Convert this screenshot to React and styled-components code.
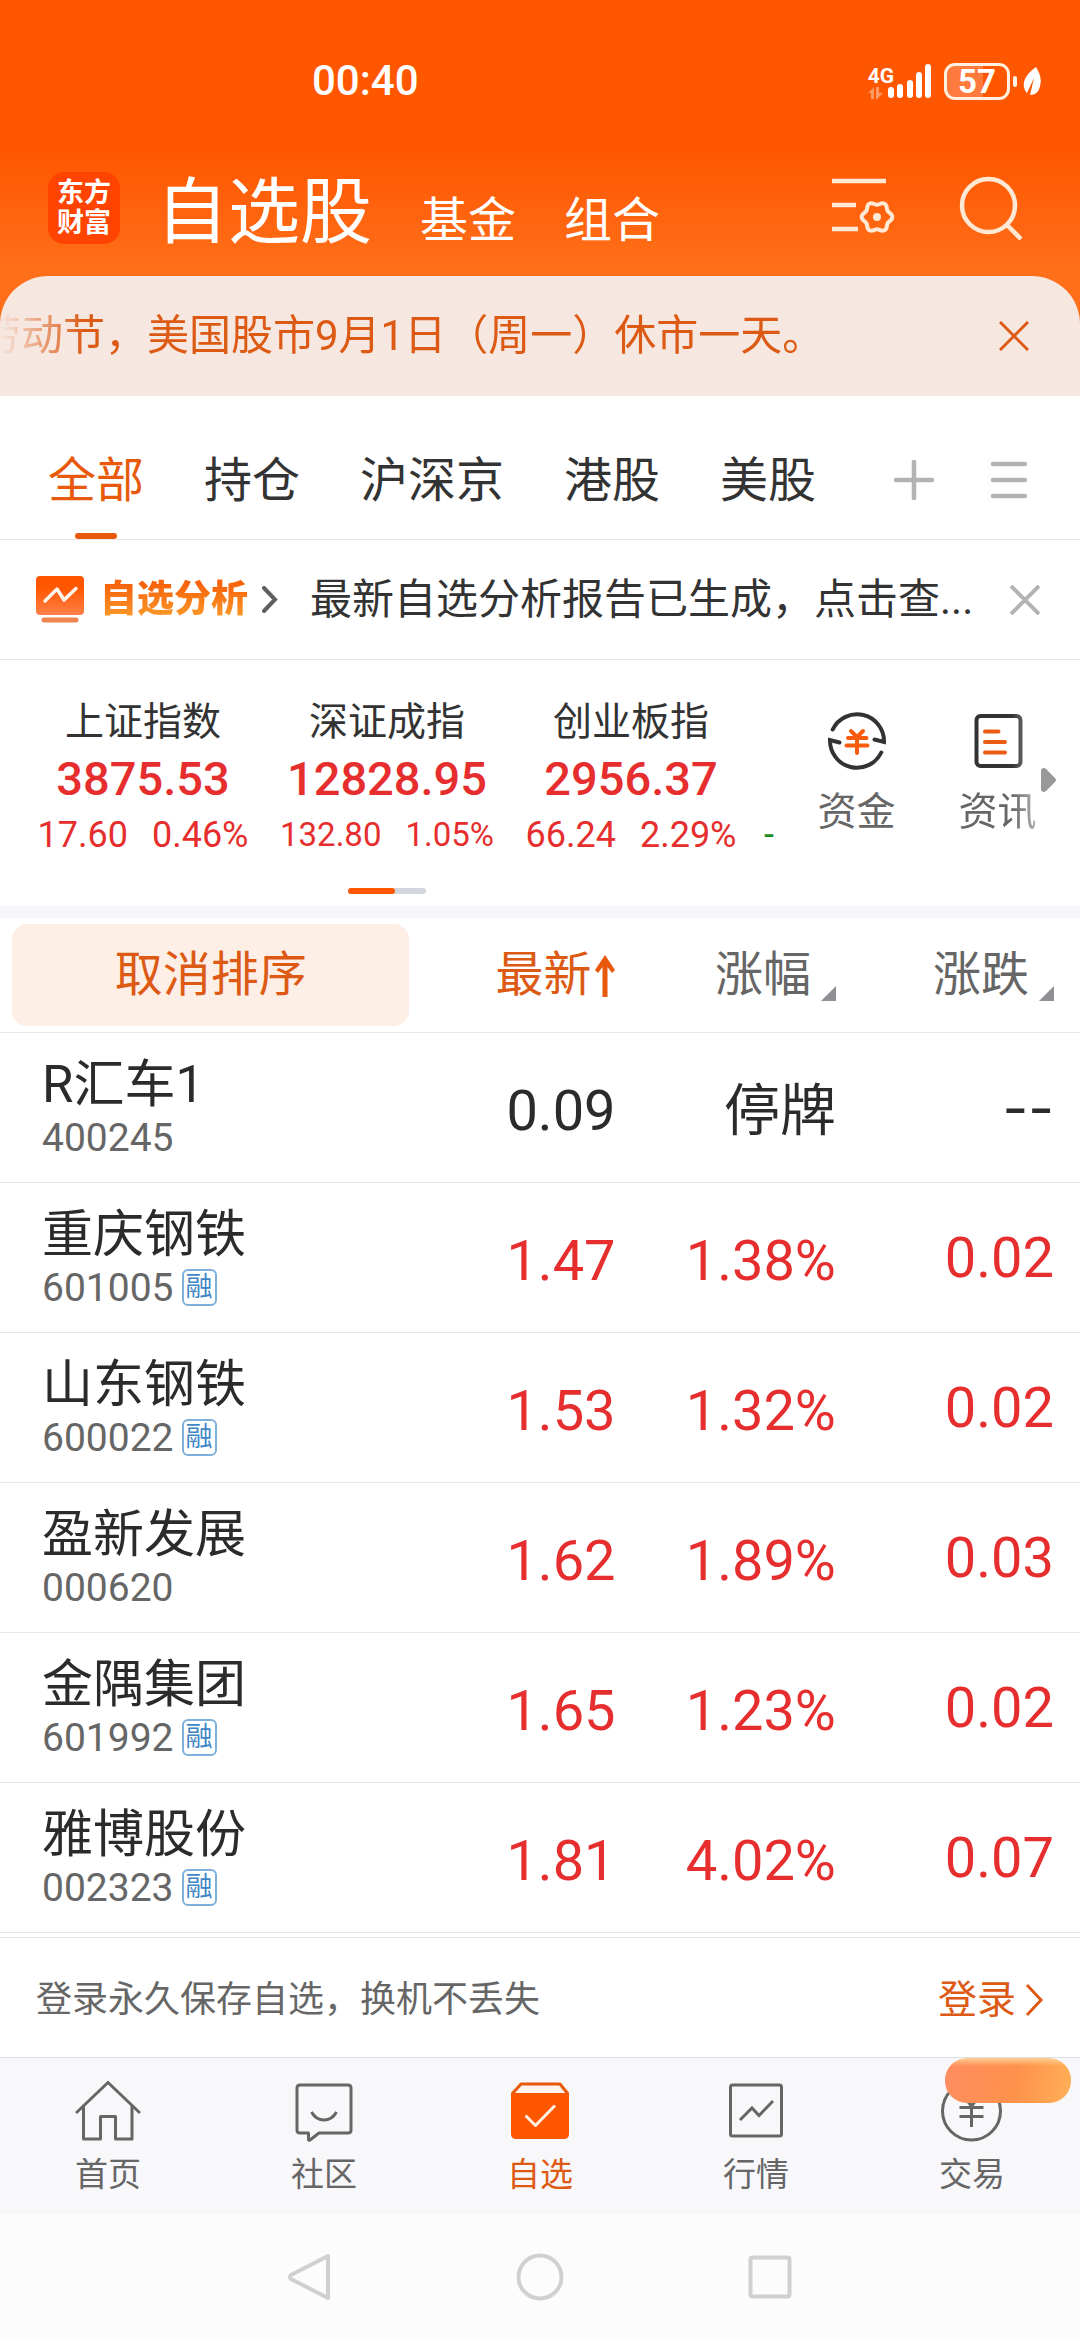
import React from "react";
import styled, { createGlobalStyle, css } from "styled-components";

const color = {
  brand: "#e8590c",
  accent: "#ff5600",
  ink: "#2b2b2b",
  text: "#333333",
  muted: "#666666",
  faint: "#b3b3b3",
  line: "#e8e8ea",
  up: "#e62e2e",
  down: "#1d8f1d",
};

const GlobalStyle = createGlobalStyle`
  * { box-sizing: border-box; }
  body {
    margin: 0;
    background: #fcfcfc;
    color: ${color.text};
    font-family: Roboto, "Noto Sans CJK SC", sans-serif;
  }
  button {
    margin: 0;
    padding: 0;
    border: 0;
    background: none;
    color: inherit;
    font: inherit;
    cursor: pointer;
  }
  a { color: inherit; text-decoration: none; }
  svg { display: block; flex: none; }
`;

const Page = styled.div`
  display: flex;
  flex-direction: column;
  background: #ffffff;
`;

/* ---------- header ---------- */

const Hero = styled.header`
  background: linear-gradient(#ff5600 0, #ff5600 150px, #ff6f1a 270px, #ff6f1a 100%);
  color: #ffffff;
`;

const StatusBar = styled.div`
  display: flex;
  align-items: center;
  justify-content: space-between;
  height: 160px;
  padding: 2px 39px 0 312px;
`;

const Clock = styled.time`
  font-size: 42px;
  font-weight: 500;
  line-height: 48px;
`;

const StatusIcons = styled.div`
  display: flex;
  align-items: center;
  gap: 6px;
`;

const Network = styled.div`
  display: flex;
  align-items: flex-end;
  margin-right: 6px;
`;

const NetworkType = styled.div`
  display: flex;
  flex-direction: column;
  align-items: flex-start;
  margin-right: -6px;
  font-size: 21px;
  font-weight: 700;
  line-height: 22px;
`;

const Battery = styled.div`
  display: flex;
  align-items: center;
  gap: 3px;

  &::after {
    content: "";
    width: 4px;
    height: 11px;
    border-radius: 2px;
    background: #fff3e6;
  }
`;

const BatteryLevel = styled.span`
  width: 66px;
  height: 37px;
  border: 3px solid #fff0e0;
  border-radius: 11px;
  background: linear-gradient(90deg, #ff7a3d 60%, transparent 60%);
  font-size: 33px;
  font-weight: 700;
  line-height: 32px;
  text-align: center;
`;

const TitleBar = styled.div`
  display: flex;
  align-items: center;
  height: 116px;
  padding: 0 57px 20px 48px;
`;

const Logo = styled.a`
  display: flex;
  flex-direction: column;
  align-items: center;
  justify-content: center;
  width: 72px;
  height: 72px;
  margin-right: 36px;
  border-radius: 16px;
  background: #ff4300;
  font-size: 27px;
  font-weight: 700;
  line-height: 30px;
`;

const Sections = styled.nav`
  display: flex;
  flex: 1;
  align-items: baseline;
  gap: 48px;
  padding-top: 10px;
`;

const Section = styled.button`
  font-size: ${(p) => (p.$active ? 72 : 48)}px;
  line-height: ${(p) => (p.$active ? 84 : 60)}px;
`;

const TitleActions = styled.div`
  display: flex;
  align-items: center;
  gap: 63px;
`;

const Notice = styled.div`
  display: flex;
  align-items: center;
  justify-content: space-between;
  height: 120px;
  padding-right: 51px;
  border-radius: 48px 48px 0 0;
  background: #f6e7e0;
  color: #dc5a14;
`;

const Marquee = styled.div`
  flex: 1;
  overflow: hidden;
  white-space: nowrap;
  font-size: 42px;
  line-height: 60px;
  text-indent: -21px;
  mask-image: linear-gradient(90deg, transparent, #000 84px);
`;

/* ---------- group tabs ---------- */

const Groups = styled.nav`
  display: flex;
  align-items: stretch;
  justify-content: space-between;
  height: 144px;
  padding: 0 52px 0 48px;
  border-bottom: 1px solid ${color.line};
`;

const GroupList = styled.div`
  display: flex;
  gap: 60px;
`;

const Group = styled.button`
  position: relative;
  padding-top: 27px;
  font-size: 48px;
  line-height: 60px;
  color: ${(p) => (p.$active ? color.brand : color.text)};

  ${(p) =>
    p.$active &&
    css`
      &::after {
        content: "";
        position: absolute;
        bottom: 0;
        left: calc(50% - 21px);
        width: 42px;
        height: 6px;
        border-radius: 3px;
        background: ${color.brand};
      }
    `}
`;

const GroupActions = styled.div`
  display: flex;
  align-items: center;
  gap: 56px;
  padding-top: 24px;
`;

/* ---------- analysis strip ---------- */

const Analysis = styled.section`
  display: flex;
  align-items: center;
  height: 120px;
  padding: 0 40px 0 36px;
  border-bottom: 1px solid ${color.line};
`;

const AnalysisLink = styled.a`
  display: flex;
  align-items: center;
  gap: 14px;
`;

const AnalysisTitle = styled.strong`
  font-size: 37px;
  font-weight: 800;
  line-height: 60px;
  background: linear-gradient(180deg, #f7640c 25%, #fb9a2a 80%);
  background-clip: text;
  color: transparent;
`;

const AnalysisText = styled.p`
  flex: 1;
  margin: 0 0 0 32px;
  overflow: hidden;
  white-space: nowrap;
  font-size: 42px;
  line-height: 60px;
`;

/* ---------- indices ---------- */

const Market = styled.section`
  display: flex;
  height: 258px;
  border-bottom: 12px solid #f6f7fa;
`;

const IndexPane = styled.div`
  display: flex;
  flex: 1;
  flex-direction: column;
  align-items: center;
  min-width: 0;
  padding-top: 35px;
`;

const IndexStrip = styled.div`
  display: flex;
  width: 100%;
  padding-left: 21px;
  overflow: hidden;
`;

const IndexCard = styled.button`
  display: flex;
  flex: 0 0 ${(p) => (p.$peek ? 21 : 244)}px;
  flex-direction: column;
  align-items: ${(p) => (p.$peek ? "flex-end" : "center")};
`;

const IndexName = styled.span`
  height: 54px;
  font-size: 39px;
  line-height: 54px;
`;

const IndexValue = styled.span`
  height: 59px;
  color: ${color.up};
  font-size: 47px;
  font-weight: 500;
  line-height: 60px;
`;

const IndexChange = styled.span`
  display: flex;
  gap: 24px;
  height: 54px;
  color: ${(p) => (p.$down ? color.down : color.up)};
  font-size: ${(p) => (p.$compact ? 33 : 36)}px;
  line-height: 54px;
`;

const Pager = styled.div`
  width: 78px;
  height: 6px;
  margin-top: 26px;
  border-radius: 3px;
  background: #d3d6dc;

  &::before {
    content: "";
    display: block;
    width: 60%;
    height: 100%;
    border-radius: 3px;
    background: ${color.accent};
  }
`;

const Shortcuts = styled.div`
  position: relative;
  display: flex;
  flex: none;
  padding: 51px 12px 0;
`;

const Shortcut = styled.button`
  display: flex;
  flex-direction: column;
  align-items: center;
  align-self: flex-start;
  gap: 14px;
  width: 141px;
  color: ${color.muted};
  font-size: 39px;
  line-height: 54px;
  ${(p) => p.$fading && "mask-image: linear-gradient(90deg, #000 60%, rgba(0, 0, 0, 0.5) 78%);"}
`;

const More = styled.span`
  position: absolute;
  top: 108px;
  right: 24px;
`;

/* ---------- quotes table ---------- */

const Quotes = styled.table`
  width: 100%;
  border-spacing: 0;
  table-layout: fixed;
`;

const HeadCell = styled.th`
  width: ${(p) => p.$width};
  height: 115px;
  padding: 0 ${(p) => (p.$last ? 26 : 0)}px 0 0;
  border-bottom: 1px solid ${color.line};
  font-weight: 400;
  text-align: right;
`;

const ClearSort = styled.button`
  display: block;
  width: calc(100% - 12px);
  height: 102px;
  margin-left: 12px;
  border-radius: 15px;
  background: #fdeee6;
  color: #dc5a14;
  font-size: 48px;
  line-height: 96px;
  text-align: center;
`;

const SortButton = styled.button`
  display: inline-flex;
  align-items: flex-end;
  gap: ${(p) => (p.$active ? 2 : 10)}px;
  vertical-align: middle;
  color: ${(p) => (p.$active ? "#dc5a14" : color.muted)};
  font-size: 48px;
  line-height: 60px;
`;

const Cell = styled.td`
  height: 150px;
  padding: 6px ${(p) => (p.$last ? 26 : 0)}px ${(p) => (p.$last ? 6 : 0)}px 0;
  border-bottom: 1px solid ${color.line};
  color: ${(p) => (p.$up ? color.up : color.ink)};
  font-family: ${(p) => (p.$empty ? "Inter, sans-serif" : "inherit")};
  font-size: 56px;
  line-height: 66px;
  text-align: right;
  white-space: nowrap;
`;

const NameCell = styled.td`
  padding: 2px 0 0 42px;
  border-bottom: 1px solid ${color.line};
`;

const StockName = styled.div`
  color: ${color.ink};
  font-size: 51px;
  line-height: 58px;
`;

const StockCode = styled.div`
  display: flex;
  align-items: center;
  gap: 8px;
  color: ${color.muted};
  font-size: 39px;
  line-height: 48px;
`;

const MarginTag = styled.span`
  padding: 0 2px;
  border: 2px solid #7fb0dc;
  border-radius: 6px;
  color: #3f86c6;
  font-size: 27px;
  line-height: 33px;
`;

/* ---------- footer ---------- */

const LoginBar = styled.div`
  display: flex;
  align-items: center;
  justify-content: space-between;
  height: 120px;
  margin-top: 4px;
  padding: 4px 36px 0;
  border-top: 1px solid ${color.line};
  color: ${color.muted};
  font-size: 36px;
  line-height: 54px;
`;

const LoginLink = styled.a`
  display: flex;
  align-items: center;
  gap: 9px;
  color: #dc5a14;
  font-size: 39px;
`;

const TabBar = styled.nav`
  position: relative;
  display: flex;
  height: 157px;
  border-top: 1px solid #dfe0e4;
  background: #f8f8fb;
`;

const Tab = styled.a`
  display: flex;
  flex: 1;
  flex-direction: column;
  align-items: center;
  gap: 11px;
  padding-top: 20px;
  color: ${(p) => (p.$active ? "#dc5a14" : color.muted)};
  font-size: 33px;
  line-height: 40px;
`;

const Promo = styled.span`
  position: absolute;
  top: 0;
  right: 9px;
  width: 126px;
  height: 45px;
  border-radius: 22px;
  background:
    linear-gradient(#ffcf94, transparent 8px),
    linear-gradient(100deg, #ff8d62, #ff914b 55%, #ffb057);
`;

const SystemNav = styled.div`
  display: flex;
  align-items: center;
  justify-content: center;
  gap: 182px;
  height: 126px;
  background: #fcfcfc;
`;

/* ---------- icons ---------- */

const Svg = ({ w, h = w, sw = 3, children, ...rest }) => (
  <svg
    width={w}
    height={h}
    viewBox={`0 0 ${w} ${h}`}
    fill="none"
    stroke="currentColor"
    strokeWidth={sw}
    aria-hidden="true"
    {...rest}
  >
    {children}
  </svg>
);

const gearPoints = Array.from({ length: 90 }, (_, i) => {
  const a = (i / 90) * Math.PI * 2;
  const r = 13.8 + 1.5 * Math.cos(6 * a);
  return `${(47 + r * Math.cos(a)).toFixed(2)},${(39 + r * Math.sin(a)).toFixed(2)}`;
}).join(" ");

const FilterIcon = () => (
  <Svg w={66} h={60} sw={4.5} stroke="#ffe9d4">
    <path d="M2 3H56M2 27H26M2 51H28" />
    <polygon points={gearPoints} strokeWidth="4" strokeLinejoin="round" />
    <circle cx="47" cy="39" r="4" fill="#ffe9d4" stroke="none" />
  </Svg>
);

const SearchIcon = () => (
  <Svg w={64} sw={4.5} stroke="#ffe9d4">
    <circle cx="29.5" cy="29.5" r="26.5" />
    <path d="M48 49L62 63" />
  </Svg>
);

const CloseIcon = ({ sw, ...rest }) => (
  <Svg w={30} sw={sw} {...rest}>
    <path d="M1 1L29 29M29 1L1 29" />
  </Svg>
);

const SignalIcon = () => (
  <Svg w={44} h={36} fill="#ffffff" stroke="none">
    <rect x="0" y="24" width="6" height="11" rx="3" />
    <rect x="9" y="21" width="6" height="14" rx="3" />
    <rect x="19" y="17" width="6" height="18" rx="3" />
    <rect x="28" y="9" width="6" height="26" rx="3" />
    <rect x="37" y="1" width="6" height="34" rx="3" />
  </Svg>
);

const DataIcon = () => (
  <Svg w={16} h={12} fill="#ff9a66" stroke="none">
    <path d="M0 6L6 0V12H3V6ZM8 0H11V6H15L9 12H8Z" />
  </Svg>
);

const LeafIcon = () => (
  <Svg w={18} h={28}>
    <path d="M13 0C17 6 19 13 17 19C16 25 12 28 7 28L11 11L4 26C-2 19 0 9 13 0Z" fill="#ffffff" stroke="none" />
  </Svg>
);

const PlusIcon = () => (
  <Svg w={40} sw={4.5} stroke={color.faint} strokeLinecap="round">
    <path d="M20 2V38M2 20H38" />
  </Svg>
);

const MenuIcon = () => (
  <Svg w={38} h={38} sw={4.5} stroke={color.faint} strokeLinecap="round">
    <path d="M3 3H35M3 19H35M3 35H35" />
  </Svg>
);

const AnalysisIcon = () => (
  <Svg w={50} h={48}>
    <defs>
      <linearGradient id="analysis" x1="0" y1="0" x2="0" y2="1">
        <stop offset="0.3" stopColor="#ff5600" />
        <stop offset="1" stopColor="#ff8048" />
      </linearGradient>
    </defs>
    <rect width="48" height="39" rx="4" fill="url(#analysis)" stroke="none" />
    <path d="M9 25L21 13L28 24L40 12.5" stroke="#fff4ea" strokeWidth="3.5" strokeLinejoin="round" strokeLinecap="round" />
    <path d="M8 44H40" stroke="#ee8550" strokeWidth="5" strokeLinecap="round" />
  </Svg>
);

const ChevronIcon = ({ w = 16, h = 27, sw = 4, ...rest }) => (
  <Svg w={w} h={h} sw={sw} {...rest}>
    <path d={`M2 2L${w - 3} ${h / 2}L2 ${h - 2}`} />
  </Svg>
);

const FundsIcon = () => (
  <Svg w={60} sw={4} stroke={color.text} strokeLinecap="round">
    <path d="M5.7 18.5A27 27 0 0 1 57 31L47.5 28.5" />
    <path d="M54.3 41.5A27 27 0 0 1 3 29L12.5 31.5" />
    <path d="M24 20L30 26L36 20M21 27H39.5M19.5 34.5H40.5M30 26V42" stroke="#fa5b0c" />
  </Svg>
);

const NewsIcon = () => (
  <Svg w={60} sw={4} stroke={color.text} strokeLinecap="round">
    <rect x="8.5" y="5" width="44" height="50" rx="4" />
    <path d="M17 20.5H30.5M17 31H37M17 41.5H37" stroke="#ea5c14" />
  </Svg>
);

const MoreIcon = () => (
  <Svg w={15} h={24}>
    <path d="M0 3Q0 0 3 0Q5 0 7 3L14 10Q16 12 14 14L7 21Q5 24 3 24Q0 24 0 21Z" fill="#999999" stroke="none" />
  </Svg>
);

const SortUpIcon = () => (
  <Svg w={22} h={60}>
    <path d="M11 10L21 25L18 28L13.500 22V52H8.500V22L4 28L1 25Z" fill="#e8590c" stroke="none" />
  </Svg>
);

const SortIcon = () => (
  <Svg w={15} h={60}>
    <path d="M15 41V56H0Z" fill="#8f8f94" stroke="none" />
  </Svg>
);

const tabIcons = {
  home: (
    <Svg w={66}>
      <path d="M1 35L33 4.5L65 35" />
      <path d="M8.5 28V61H25.5V38.5H40.5V61H57V28" strokeLinejoin="round" />
    </Svg>
  ),
  chat: (
    <Svg w={66} strokeLinejoin="round">
      <path d="M8 7H57Q60 7 60 10V52Q60 55 57 55H28L19 62Q17.500 63 17.500 61V55H9Q6 55 6 52V10Q6 7 9 7" />
      <path d="M20.500 34Q25 42 33 42T45.500 34" />
    </Svg>
  ),
  watch: (
    <Svg w={66} strokeLinejoin="round">
      <path d="M5 16L14 6H53L61 16" stroke="#e8590c" fill="#fff4ec" />
      <path d="M4 15H62V56Q62 61 57 61H9Q4 61 4 56Z" fill="#ff5600" stroke="none" />
      <path d="M18.500 37.500L28.500 47.500L48 27.500" stroke="#fff0e2" />
    </Svg>
  ),
  quotes: (
    <Svg w={66}>
      <rect x="7.500" y="7" width="51" height="51" rx="2" />
      <path d="M17 42L29 30L36 37.500L50 23" />
    </Svg>
  ),
  trade: (
    <Svg w={66}>
      <circle cx="32.500" cy="33" r="29" />
      <path d="M20.500 29.500H44.500M20.500 38.500H44.500M32.500 49V28M23 16L32.500 28L42 16" />
    </Svg>
  ),
};

/* ---------- data ---------- */

const sections = ["自选股", "基金", "组合"];
const groups = ["全部", "持仓", "沪深京", "港股", "美股"];

const indices = [
  { name: "上证指数", value: "3875.53", change: ["17.60", "0.46%"] },
  { name: "深证成指", value: "12828.95", change: ["132.80", "1.05%"] },
  { name: "创业板指", value: "2956.37", change: ["66.24", "2.29%"] },
  { name: "", value: "", change: ["-"], peek: true },
];

const stocks = [
  { name: "R汇车1", code: "400245", price: "0.09", percent: "停牌", delta: "--" },
  { name: "重庆钢铁", code: "601005", margin: true, price: "1.47", percent: "1.38%", delta: "0.02", up: true },
  { name: "山东钢铁", code: "600022", margin: true, price: "1.53", percent: "1.32%", delta: "0.02", up: true },
  { name: "盈新发展", code: "000620", price: "1.62", percent: "1.89%", delta: "0.03", up: true },
  { name: "金隅集团", code: "601992", margin: true, price: "1.65", percent: "1.23%", delta: "0.02", up: true },
  { name: "雅博股份", code: "002323", margin: true, price: "1.81", percent: "4.02%", delta: "0.07", up: true },
];

const tabs = [
  { id: "home", label: "首页" },
  { id: "chat", label: "社区" },
  { id: "watch", label: "自选", active: true },
  { id: "quotes", label: "行情" },
  { id: "trade", label: "交易" },
];

export default function App() {
  return (
    <Page>
      <GlobalStyle />

      <Hero>
        <StatusBar>
          <Clock>00:40</Clock>
          <StatusIcons>
            <Network>
              <NetworkType>
                <span>4G</span>
                <DataIcon />
              </NetworkType>
              <SignalIcon />
            </Network>
            <Battery>
              <BatteryLevel>57</BatteryLevel>
            </Battery>
            <LeafIcon />
          </StatusIcons>
        </StatusBar>

        <TitleBar>
          <Logo href="#top">
            <span>东方</span>
            <span>财富</span>
          </Logo>
          <Sections>
            {sections.map((name, i) => (
              <Section key={name} $active={i === 0}>
                {name}
              </Section>
            ))}
          </Sections>
          <TitleActions>
            <button aria-label="设置">
              <FilterIcon />
            </button>
            <button aria-label="搜索">
              <SearchIcon />
            </button>
          </TitleActions>
        </TitleBar>

        <Notice>
          <Marquee>劳动节，美国股市9月1日（周一）休市一天。</Marquee>
          <button aria-label="关闭公告">
            <CloseIcon sw={3} />
          </button>
        </Notice>
      </Hero>

      <Groups>
        <GroupList>
          {groups.map((name, i) => (
            <Group key={name} $active={i === 0}>
              {name}
            </Group>
          ))}
        </GroupList>
        <GroupActions>
          <button aria-label="添加">
            <PlusIcon />
          </button>
          <button aria-label="菜单">
            <MenuIcon />
          </button>
        </GroupActions>
      </Groups>

      <Analysis>
        <AnalysisLink href="#analysis">
          <AnalysisIcon />
          <AnalysisTitle>自选分析</AnalysisTitle>
          <ChevronIcon stroke="#5f5f5f" strokeLinecap="round" />
        </AnalysisLink>
        <AnalysisText>最新自选分析报告已生成，点击查...</AnalysisText>
        <button aria-label="关闭分析">
          <CloseIcon sw={4} stroke={color.faint} />
        </button>
      </Analysis>

      <Market>
        <IndexPane>
          <IndexStrip>
            {indices.map((item) => (
              <IndexCard key={item.change[0]} $peek={item.peek}>
                <IndexName>{item.name}</IndexName>
                <IndexValue>{item.value}</IndexValue>
                <IndexChange $down={item.peek} $compact={item.value.length > 7}>
                  {item.change.map((part) => (
                    <span key={part}>{part}</span>
                  ))}
                </IndexChange>
              </IndexCard>
            ))}
          </IndexStrip>
          <Pager />
        </IndexPane>
        <Shortcuts>
          <Shortcut>
            <FundsIcon />
            资金
          </Shortcut>
          <Shortcut $fading>
            <NewsIcon />
            资讯
          </Shortcut>
          <More>
            <MoreIcon />
          </More>
        </Shortcuts>
      </Market>

      <Quotes>
        <thead>
          <tr>
            <HeadCell $width="37.9%">
              <ClearSort>取消排序</ClearSort>
            </HeadCell>
            <HeadCell $width="19.1%">
              <SortButton $active>
                最新
                <SortUpIcon />
              </SortButton>
            </HeadCell>
            <HeadCell $width="20.4%">
              <SortButton>
                涨幅
                <SortIcon />
              </SortButton>
            </HeadCell>
            <HeadCell $width="22.6%" $last>
              <SortButton>
                涨跌
                <SortIcon />
              </SortButton>
            </HeadCell>
          </tr>
        </thead>
        <tbody>
          {stocks.map((s) => (
            <tr key={s.code}>
              <NameCell>
                <StockName>{s.name}</StockName>
                <StockCode>
                  {s.code}
                  {s.margin && <MarginTag>融</MarginTag>}
                </StockCode>
              </NameCell>
              <Cell $up={s.up}>{s.price}</Cell>
              <Cell $up={s.up}>{s.percent}</Cell>
              <Cell $up={s.up} $last $empty={s.delta === "--"}>
                {s.delta}
              </Cell>
            </tr>
          ))}
        </tbody>
      </Quotes>

      <LoginBar>
        <span>登录永久保存自选，换机不丢失</span>
        <LoginLink href="#login">
          登录
          <ChevronIcon w={19} h={34} sw={3} />
        </LoginLink>
      </LoginBar>

      <TabBar>
        {tabs.map((t) => (
          <Tab key={t.id} href={`#${t.id}`} $active={t.active}>
            {tabIcons[t.id]}
            {t.label}
          </Tab>
        ))}
        <Promo />
      </TabBar>

      <SystemNav>
        <button aria-label="返回">
          <Svg w={48} sw={4} stroke="#d0d0d0" strokeLinejoin="round">
            <path d="M42 3V45L5 26Q3 24 5 22Z" />
          </Svg>
        </button>
        <button aria-label="主页">
          <Svg w={48} sw={4} stroke="#d0d0d0">
            <circle cx="24" cy="24" r="21.500" />
          </Svg>
        </button>
        <button aria-label="最近任务">
          <Svg w={48} sw={4} stroke="#d0d0d0">
            <rect x="4.500" y="4.500" width="39" height="39" rx="2" />
          </Svg>
        </button>
      </SystemNav>
    </Page>
  );
}
